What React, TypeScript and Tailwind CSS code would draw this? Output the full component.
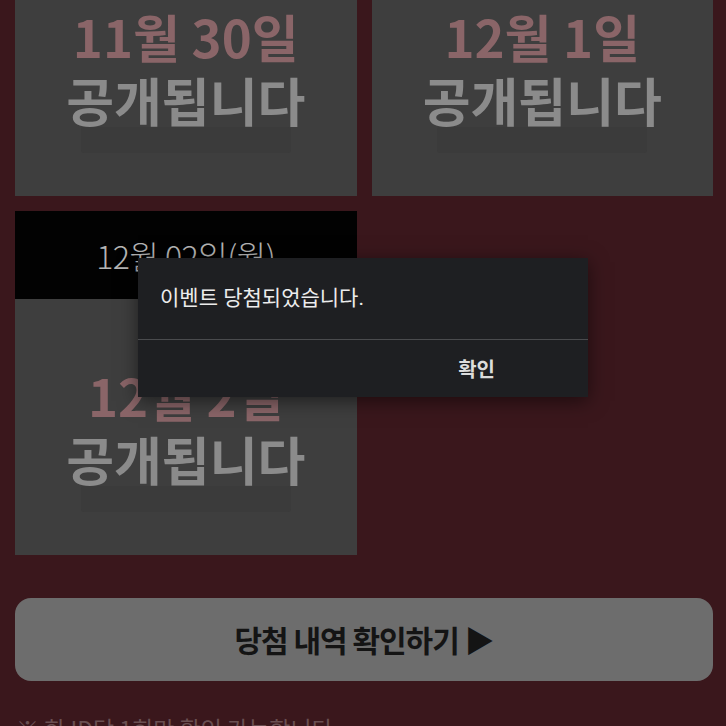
import React from "react";

const KR = { fontFamily: '"Noto Sans CJK KR", "Noto Sans", sans-serif' };

function Card({ header, date }: { header?: string; date: string }) {
  return (
    <div className="flex flex-col h-[344px] bg-[#3e3e3e]">
      <div className="h-[88px] bg-[#020202] flex items-center justify-center">
        {header && (
          <span className="text-[32px] font-light text-[#b4b4b4] tracking-[-0.5px]" style={KR}>
            {header}
          </span>
        )}
      </div>
      <div className="flex-1 flex flex-col items-center justify-center">
        <div className="text-[51px] font-bold leading-[63px] text-[#8a6568]" style={KR}>
          {date}
        </div>
        <div className="text-[52px] font-bold leading-[63px] text-[#8b8b8b]" style={KR}>
          공개됩니다
        </div>
        <div className="mt-[-4px] mb-[-22px] w-[210px] h-[26px] rounded-[3px] bg-[#3b3b3b]" />
      </div>
    </div>
  );
}

export default function App() {
  return (
    <div className="relative w-[726px] h-[726px] overflow-hidden bg-[#3a171c]" style={KR}>
      <div className="mt-[-148px] grid grid-cols-2 gap-[15px] pl-[15px] pr-[13px]">
        <Card date="11월 30일" />
        <Card date="12월 1일" />
        <Card header="12월 02일(월)" date="12월 2일" />
      </div>
      <div className="mt-[43px] pl-[15px] pr-[13px]">
        <div className="h-[83px] rounded-[16px] bg-[#6d6d6d] flex items-center justify-center">
          <span className="text-[30px] font-bold text-[#141414] tracking-[-1px]" style={KR}>
            당첨 내역 확인하기 ▶
          </span>
        </div>
      </div>
      <div className="mt-[32px] pl-[16px] text-[23px] leading-[30px] text-[#6a4f52]" style={KR}>
        ※ 한 ID당 1회만 확인 가능합니다.
      </div>

      <div className="absolute left-[138px] top-[258px] w-[450px] bg-[#1e1f22] shadow-[0_4px_18px_rgba(0,0,0,0.5)]">
        <div className="h-[81px] flex items-center pl-[22px]">
          <span className="text-[21px] text-[#ececec]" style={{ fontFamily: 'Roboto, "Noto Sans CJK KR", sans-serif' }}>
            이벤트 당첨되었습니다.
          </span>
        </div>
        <div className="h-px bg-[#4a4b4e]" />
        <div className="h-[57px] flex items-center justify-end pr-[93px]">
          <span className="text-[20px] font-bold text-[#dcdcdc]" style={KR}>확인</span>
        </div>
      </div>
    </div>
  );
}
